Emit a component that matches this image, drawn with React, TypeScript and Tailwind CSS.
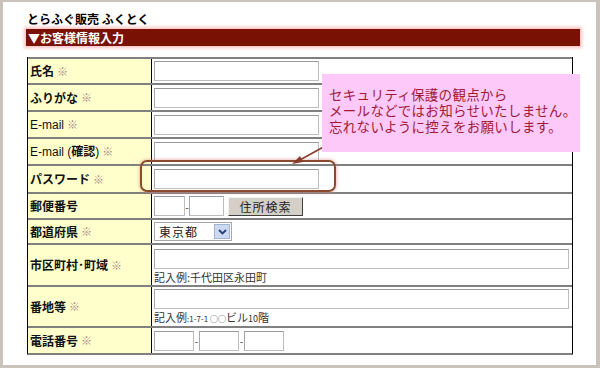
import React from 'react';

const jp = { fontFamily: '"Noto Sans CJK JP", "Liberation Sans", sans-serif' };

function Req() {
  return <span className="ml-[3px] text-[11px] font-bold text-[#a88787]">※</span>;
}

function TextBox({ w, className = '' }: { w: string; className?: string }) {
  return (
    <div
      className={`h-[20px] border border-[#bdbdbd] border-t-[#9a9a9a] border-l-[#a8a8a8] bg-white ${w} ${className}`}
    />
  );
}

function Row({
  label,
  req = true,
  h,
  children,
}: {
  label: React.ReactNode;
  req?: boolean;
  h: string;
  children?: React.ReactNode;
}) {
  return (
    <div className={`flex border-t-2 border-[#808080] ${h}`}>
      <div className="w-[124px] shrink-0 bg-[#ffffcc] border-r border-black flex items-center pl-[2px] text-[12px] font-bold text-[#111]">
        {label}
        {req && <Req />}
      </div>
      <div className="flex-1 flex flex-col justify-center pl-[2px]">{children}</div>
    </div>
  );
}

export default function App() {
  return (
    <div className="w-[600px] h-[368px] bg-[#c9c3bb] pt-[2px] pl-[3px] pr-[4px] pb-[3px]" style={jp}>
      <div className="relative h-full bg-white">
        {/* Title */}
        <div className="ml-[24px] pt-[9px] h-[25px] text-[12px] font-bold leading-[16px] text-black">
          とらふぐ販売 ふくとく
        </div>

        {/* Section bar */}
        <div className="ml-[23px] mt-[2px] w-[554px] h-[17px] bg-[#7a1105] shadow-[0_0_3px_2px_rgba(255,150,150,0.6)] pl-[2px] text-[12px] leading-[17px] font-bold text-white">
          ▼お客様情報入力
        </div>

        {/* Form table */}
        <div className="ml-[24px] mt-[11px] w-[546px] border-l border-r border-black border-b-2 border-b-[#808080]">
          <Row label="氏名" h="h-[26px]">
            <TextBox w="w-[165px]" />
          </Row>
          <Row label="ふりがな" h="h-[27px]">
            <TextBox w="w-[165px]" />
          </Row>
          <Row label={<span className="font-['Liberation_Sans'] font-normal">E-mail</span>} h="h-[27px]">
            <TextBox w="w-[165px]" />
          </Row>
          <Row
            label={
              <span>
                <span className="font-['Liberation_Sans'] font-normal">E-mail (</span>確認
                <span className="font-['Liberation_Sans'] font-normal">)</span>
              </span>
            }
            h="h-[27px]"
          >
            <TextBox w="w-[165px]" />
          </Row>
          <Row label="パスワード" h="h-[28px]">
            <TextBox w="w-[165px]" />
          </Row>
          <Row label="郵便番号" req={false} h="h-[26px]">
            <div className="flex items-center">
              <TextBox w="w-[31px]" />
              <span className="w-[4px] text-[10px] text-[#333] text-center">-</span>
              <TextBox w="w-[35px]" />
              <div className="ml-[4px] h-[19px] w-[75px] bg-[#d4d0c8] border border-[#f4f4f4] border-r-[#404040] border-b-[#404040] text-[12px] leading-[17px] tracking-[1px] text-center text-[#222]">
                住所検索
              </div>
            </div>
          </Row>
          <Row label="都道府県" h="h-[25px]">
            <div className="flex h-[19px] w-[78px] items-center border border-[#a8a8a8] bg-white">
              <span className="flex-1 pl-[4px] text-[12px] leading-[17px] tracking-[1px] text-[#222]">東京都</span>
              <div className="mr-[1px] flex h-[15px] w-[16px] items-center justify-center border border-[#9fb4d8] bg-[#cdd9f0]">
                <svg width="9" height="6" viewBox="0 0 9 6">
                  <path d="M1 1 L4.5 4.5 L8 1" fill="none" stroke="#2a3f7a" strokeWidth="1.8" />
                </svg>
              </div>
            </div>
          </Row>
          <Row label="市区町村･町域" h="h-[42px]">
            <div className="pt-[2px]">
              <TextBox w="w-[415px]" />
              <div className="text-[11px] leading-[14px] text-[#333] mt-[1px]">記入例:千代田区永田町</div>
            </div>
          </Row>
          <Row label="番地等" h="h-[41px]">
            <div className="pt-[2px]">
              <TextBox w="w-[415px]" />
              <div className="text-[11px] leading-[14px] text-[#333] mt-[1px]">
                記入例<span className="text-[8px]">:1-7-1 ○○</span>ビル<span className="text-[9px]">10</span>階
              </div>
            </div>
          </Row>
          <Row label="電話番号" h="h-[27px]">
            <div className="flex items-center">
              <TextBox w="w-[40px]" />
              <span className="w-[5px] text-[10px] text-[#333] text-center">-</span>
              <TextBox w="w-[40px]" />
              <span className="w-[5px] text-[10px] text-[#333] text-center">-</span>
              <TextBox w="w-[40px]" />
            </div>
          </Row>
        </div>

        {/* Highlight around password field */}
        <div className="absolute left-[137px] top-[158px] w-[196px] h-[32px] rounded-[7px] border-2 border-[#8a4a2c] shadow-[0_0_3px_1px_rgba(220,140,140,0.5)]" />

        {/* Arrow */}
        <svg className="absolute left-[280px] top-[130px]" width="60" height="40" viewBox="0 0 60 40">
          <line x1="55" y1="7" x2="15" y2="29" stroke="#8a3a2c" strokeWidth="1.5" />
          <path d="M9 32 L17 24 L20 30 Z" fill="#8a3a2c" />
        </svg>

        {/* Tooltip */}
        <div className="absolute left-[319px] top-[72px] w-[258px] h-[78px] bg-[#fcc9f8] pl-[7px] pt-[12px] text-[13.5px] leading-[16px] text-[#a01a38] tracking-[0.3px]">
          <div>セキュリティ保護の観点から</div>
          <div>メールなどではお知らせいたしません。</div>
          <div>忘れないように控えをお願いします。</div>
        </div>
      </div>
    </div>
  );
}
